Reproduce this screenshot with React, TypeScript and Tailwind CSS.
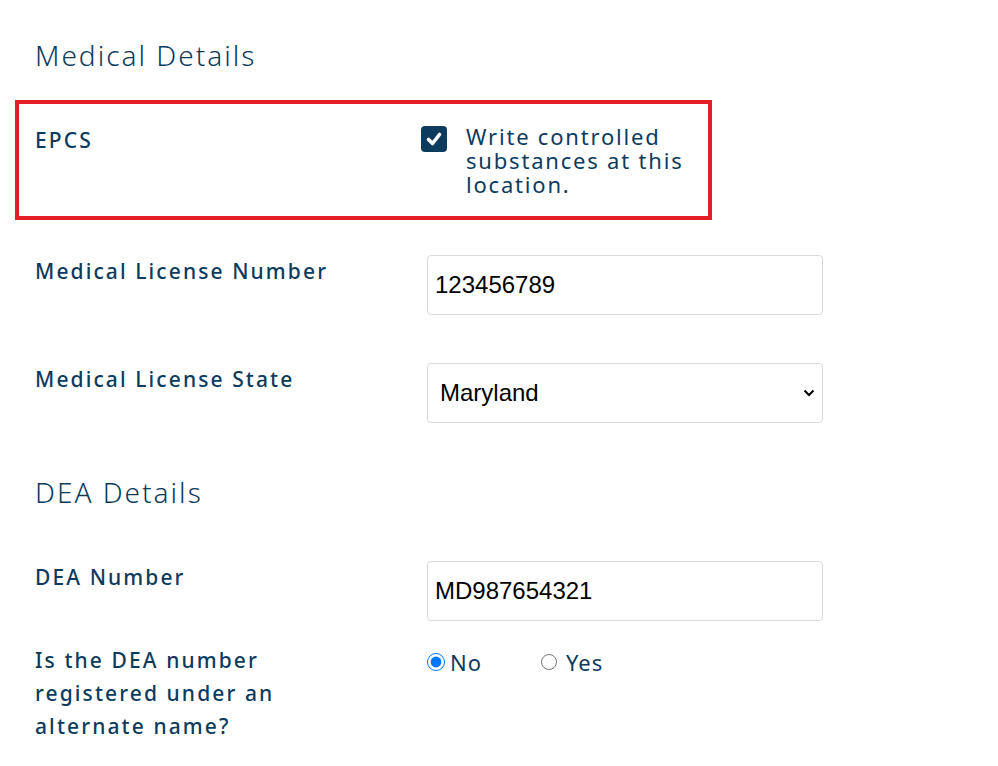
import React from 'react';

const font = { fontFamily: '"Noto Sans", "Open Sans", sans-serif' };

const Label = ({ children }: { children: React.ReactNode }) => (
  <div className="w-[305px] text-[21px] leading-[33px] font-medium tracking-[2.1px] text-[#0d3b5e]">{children}</div>
);

const TextBox = ({ value }: { value: string }) => (
  <input
    readOnly
    value={value}
    className="w-[396px] h-[60px] border border-[#dadada] rounded-[4px] px-[7px] text-[24px] text-black bg-white outline-none font-['Liberation_Sans',Arial,sans-serif]"
  />
);

const App: React.FC = () => {
  return (
    <div className="w-[998px] h-[766px] bg-white px-[35px] pt-[35px]" style={font}>
      <h2 className="text-[28px] leading-[40px] font-light tracking-[2px] text-[#0d3b5e]">Medical Details</h2>

      {/* EPCS - highlighted */}
      <div className="mt-[25px] -ml-[20px] w-[697px] border-4 border-[#e31e25] pl-[16px] pt-[20px] pb-[20px] grid grid-cols-[386px_1fr]">
        <Label>EPCS</Label>
        <div className="flex gap-[19px] items-start pt-[2px]">
          <div className="w-[26px] h-[26px] rounded-[4px] bg-[#0d3b5e] flex items-center justify-center shrink-0">
            <svg width="18" height="18" viewBox="0 0 18 18" fill="none" stroke="white" strokeWidth="3.6" strokeLinecap="round" strokeLinejoin="round">
              <polyline points="3.5 9.5 7.5 13.5 14.5 4.5" />
            </svg>
          </div>
          <div className="text-[22px] leading-[24px] tracking-[1.8px] text-[#0d3b5e] -mt-[2px]">
            Write controlled<br />substances at this<br />location.
          </div>
        </div>
      </div>

      <div className="mt-[35px] grid grid-cols-[392px_1fr] items-start">
        <Label>Medical License Number</Label>
        <TextBox value="123456789" />
      </div>

      <div className="mt-[48px] grid grid-cols-[392px_1fr] items-start">
        <Label>Medical License State</Label>
        <div className="relative w-[396px] h-[60px] border border-[#dadada] rounded-[4px] bg-white flex items-center pl-[12px] text-[24px] text-black font-['Liberation_Sans',Arial,sans-serif]">
          Maryland
          <svg className="absolute right-[7px] top-[25px]" width="12" height="8" viewBox="0 0 12 8" fill="none" stroke="black" strokeWidth="2">
            <polyline points="1.5 1.5 6 6 10.5 1.5" />
          </svg>
        </div>
      </div>

      <h2 className="mt-[49px] text-[28px] leading-[40px] font-light tracking-[2px] text-[#0d3b5e]">DEA Details</h2>

      <div className="mt-[49px] grid grid-cols-[392px_1fr] items-start">
        <Label>DEA Number</Label>
        <TextBox value="MD987654321" />
      </div>

      <div className="mt-[23px] grid grid-cols-[392px_1fr] items-start">
        <Label>Is the DEA number registered under an alternate name?</Label>
        <div className="flex items-center h-[36px] text-[22px] tracking-[1px] text-[#0d3b5e]">
          <label className="flex items-center w-[114px]">
            <input type="radio" name="alt" defaultChecked className="w-[18px] h-[18px] m-0 mr-[5px] accent-[#0075ff]" />
            No
          </label>
          <label className="flex items-center">
            <input type="radio" name="alt" className="w-[16px] h-[16px] m-0 mr-[9px]" />
            Yes
          </label>
        </div>
      </div>
    </div>
  );
};

export default App;
